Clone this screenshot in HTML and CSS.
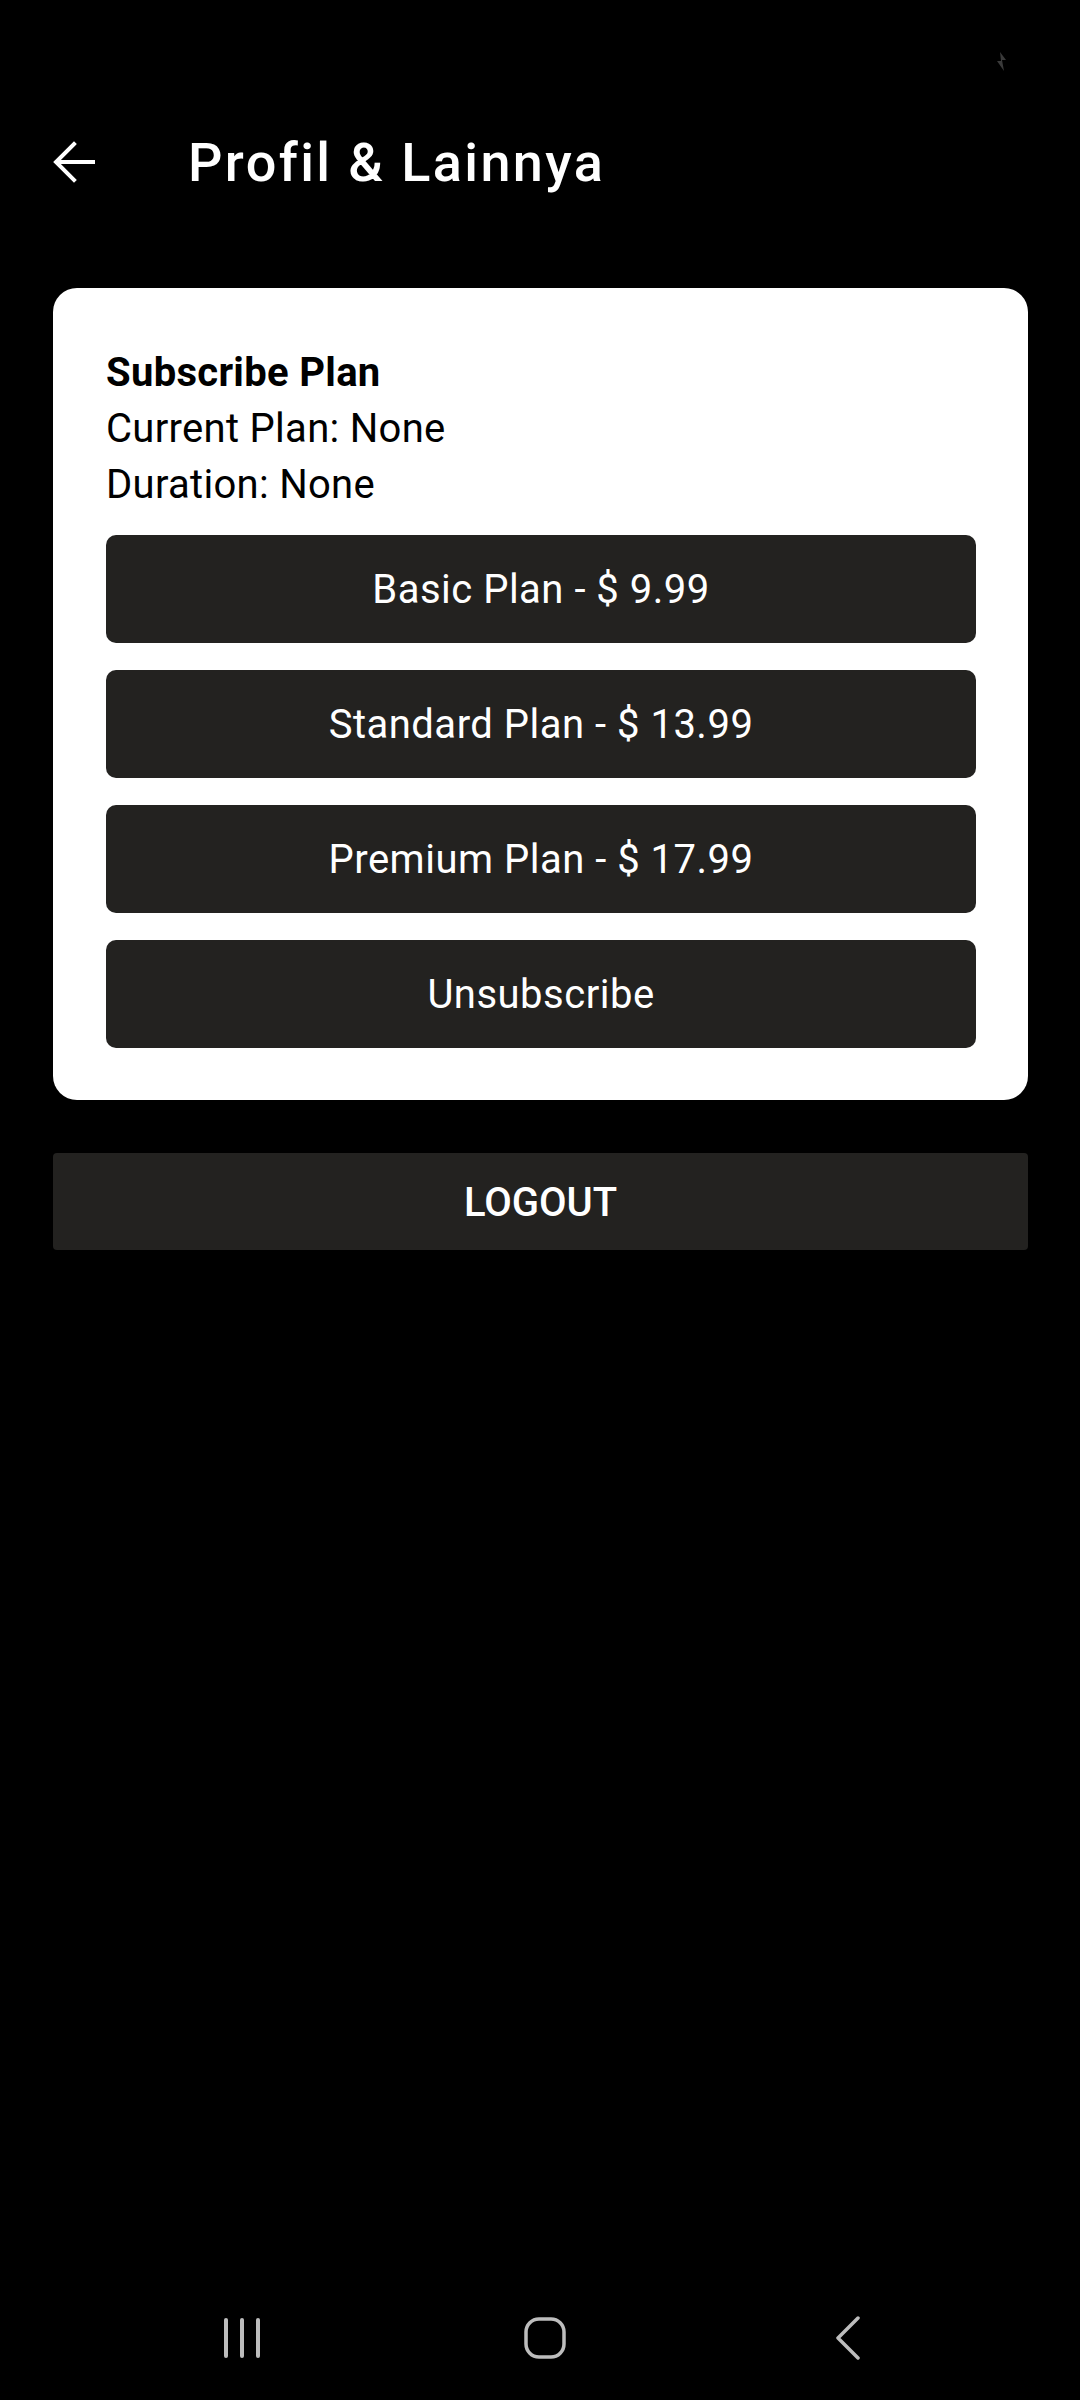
FILE: index.html
```html
<!DOCTYPE html>
<html lang="id">
<head>
<meta charset="utf-8">
<title>Profil &amp; Lainnya</title>
<link rel="stylesheet" href="styles.css">
</head>
<body>
<div class="screen">
  <div class="status-bar">
    <svg class="bolt" width="12" height="19" viewBox="0 0 12 19"><path d="M4 0 L10 8 L6 8 L8 19 L1 9 L5 9 Z" fill="#3a3a3a"/></svg>
  </div>
  <header class="app-bar">
    <svg class="back" width="42" height="42" viewBox="0 0 42 42"><path d="M40 21 H4 M21 3 L3 21 L21 39" fill="none" stroke="#fff" stroke-width="4" stroke-linecap="square"/></svg>
    <h1 class="title">Profil &amp; Lainnya</h1>
  </header>
  <main class="content">
    <section class="card">
      <div class="card-text">
        <div class="card-title">Subscribe Plan</div>
        <div class="card-line">Current Plan: None</div>
        <div class="card-line">Duration: None</div>
      </div>
      <div class="plans">
        <button class="plan-btn">Basic Plan - $ 9.99</button>
        <button class="plan-btn">Standard Plan - $ 13.99</button>
        <button class="plan-btn">Premium Plan - $ 17.99</button>
        <button class="plan-btn">Unsubscribe</button>
      </div>
    </section>
    <button class="logout">LOGOUT</button>
  </main>
  <nav class="nav-bar">
    <div class="nav-slot">
      <svg width="40" height="42" viewBox="0 0 40 42"><g stroke="#bdbdbd" stroke-width="4" stroke-linecap="round"><path d="M4 3 V39"/><path d="M20 3 V39"/><path d="M36 3 V39"/></g></svg>
    </div>
    <div class="nav-slot">
      <svg width="44" height="44" viewBox="0 0 44 44"><rect x="3" y="3" width="38" height="38" rx="13" fill="none" stroke="#bdbdbd" stroke-width="3.5"/></svg>
    </div>
    <div class="nav-slot">
      <svg width="26" height="44" viewBox="0 0 26 44"><path d="M23 2 L3 22 L23 42" fill="none" stroke="#bdbdbd" stroke-width="3.5" stroke-linecap="round" stroke-linejoin="round"/></svg>
    </div>
  </nav>
</div>
</body>
</html>
```

FILE: styles.css
```css
html, body {
  margin: 0;
  padding: 0;
  background: #000;
}

body {
  font-family: Roboto, "Liberation Sans", sans-serif;
  color: #fff;
}

.screen {
  width: 1080px;
  height: 2400px;
  display: flex;
  flex-direction: column;
  background: #000;
}

.status-bar {
  height: 84px;
  display: flex;
  justify-content: flex-end;
  align-items: flex-start;
  padding-right: 72px;
  box-sizing: border-box;
}

.bolt {
  margin-top: 52px;
}

.app-bar {
  display: flex;
  align-items: flex-start;
  padding: 47px 0 0 53px;
  gap: 93px;
}

.back {
  margin-top: 10px;
  flex: none;
}

.title {
  margin: 0;
  font-size: 54px;
  line-height: 64px;
  font-weight: 500;
  letter-spacing: 2.4px;
  color: #fff;
}

.content {
  display: flex;
  flex-direction: column;
  padding: 93px 52px 0 53px;
  gap: 53px;
}

.card {
  background: #fff;
  border-radius: 24px;
  padding: 57px 52px 52px 53px;
  display: flex;
  flex-direction: column;
  gap: 22px;
}

.card-text {
  color: #000;
  font-size: 40px;
  line-height: 56px;
  letter-spacing: 0.3px;
}

.card-title {
  font-weight: 700;
}

.plans {
  display: flex;
  flex-direction: column;
  gap: 27px;
}

.plan-btn,
.logout {
  border: none;
  margin: 0;
  background: #232220;
  color: #fff;
  font-family: Roboto, "Liberation Sans", sans-serif;
  cursor: pointer;
}

.plan-btn {
  height: 108px;
  border-radius: 10px;
  font-size: 40px;
  letter-spacing: 0.5px;
  padding-top: 2px;
}

.logout {
  height: 97px;
  border-radius: 4px;
  font-size: 40px;
  font-weight: 500;
  padding-top: 2px;
}

.nav-bar {
  margin-top: auto;
  height: 124px;
  display: flex;
  align-items: center;
  padding-left: 90px;
  box-sizing: border-box;
}

.nav-slot {
  width: 303px;
  display: flex;
  justify-content: center;
  align-items: center;
}
```
